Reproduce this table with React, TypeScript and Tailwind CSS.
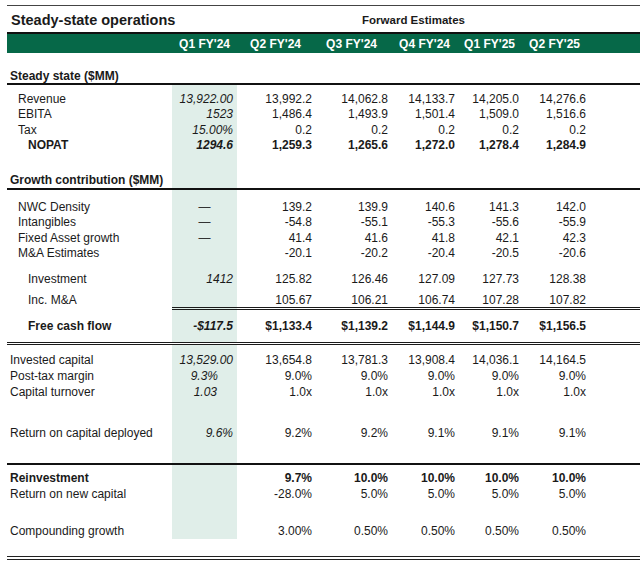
import React from 'react';
import clsx from 'clsx';

const GRID = 'grid grid-cols-[165px_65px_79px_76px_67px_64px_67px_1fr]';
const SHADE = 'bg-[#e0eee9]';

interface RowProps {
  label?: string;
  q1?: string;
  vals?: string[];
  height?: string;
  indent?: string;
  bold?: boolean;
  q1Class?: string;
  rule?: boolean;
  className?: string;
}

const Row: React.FC<RowProps> = ({
  label = '',
  q1 = '',
  vals = [],
  height = 'h-[15.5px]',
  indent = 'pl-[11px]',
  bold = false,
  q1Class = 'justify-end pr-[4px] italic',
  rule = false,
  className,
}) => {
  // Inc. M&A gets the double rule under the numbers only
  const cell = clsx('flex', rule ? 'items-end border-b-[3px] border-double border-[#1a1a1a]' : 'items-center');
  return (
    <div className={clsx(GRID, height, bold && 'font-bold', className)}>
      <div className={clsx('flex', rule ? 'items-end pb-[3px]' : 'items-center', indent)}>{label}</div>
      <div className={clsx(cell, SHADE, q1Class)}>{q1}</div>
      {[0, 1, 2, 3, 4].map((i) => (
        <div key={i} className={clsx(cell, 'justify-end pr-[4px]')}>
          {vals[i] ?? ''}
        </div>
      ))}
      <div className={cell} />
    </div>
  );
};

const Gap: React.FC<{ height: string; shaded?: boolean }> = ({ height, shaded = true }) => (
  <div className={clsx(GRID, height)}>
    <div />
    <div className={shaded ? SHADE : ''} />
  </div>
);

const headers = [
  { t: "Q1 FY'24", pr: 'pr-[7px]' },
  { t: "Q2 FY'24", pr: 'pr-[15px]' },
  { t: "Q3 FY'24", pr: 'pr-[15px]' },
  { t: "Q4 FY'24", pr: 'pr-[9px]' },
  { t: "Q1 FY'25", pr: 'pr-[8px]' },
  { t: "Q2 FY'25", pr: 'pr-[10px]' },
];

export default function App() {
  return (
    <div className="w-[640px] h-[568px] bg-white pt-[5px] pl-[7px] text-[12px] leading-[14px] text-[#1a1a1a] font-['Liberation_Sans',Arial,sans-serif] overflow-hidden">
      <div className="w-[633px]">
        <div className="border-t border-[#444]" />

        {/* Title */}
        <div className={clsx(GRID, 'h-[26px] items-center pt-[1px]')}>
          <div className="col-span-2 pl-[4px] text-[14.5px] leading-[18px] font-bold">Steady-state operations</div>
          <div className="col-span-5 text-center text-[11.5px] font-bold">Forward Estimates</div>
        </div>

        {/* Column header band */}
        <div className={clsx(GRID, 'h-[21px] border-t-2 border-[#111] bg-[#066848] text-white font-bold')}>
          <div />
          {headers.map((h) => (
            <div key={h.t} className={clsx('flex items-center justify-end', h.pr)}>
              {h.t}
            </div>
          ))}
        </div>

        <div className="h-[32px] flex items-end pl-[3px] border-b-2 border-[#111] font-bold">Steady state ($MM)</div>
        <Gap height="h-[6px]" />
        <Row label="Revenue" q1="13,922.00" vals={['13,992.2', '14,062.8', '14,133.7', '14,205.0', '14,276.6']} />
        <Row label="EBITA" q1="1523" vals={['1,486.4', '1,493.9', '1,501.4', '1,509.0', '1,516.6']} />
        <Row label="Tax" q1="15.00%" vals={['0.2', '0.2', '0.2', '0.2', '0.2']} />
        <Row label="NOPAT" indent="pl-[21px]" bold q1="1294.6" vals={['1,259.3', '1,265.6', '1,272.0', '1,278.4', '1,284.9']} />

        <div className={clsx(GRID, 'h-[37px] border-b-2 border-[#111] font-bold')}>
          <div className="flex items-end pl-[3px] pb-[1px] whitespace-nowrap">Growth contribution ($MM)</div>
          <div className={SHADE} />
        </div>
        <Gap height="h-[9px]" />
        <Row label="NWC Density" q1="—" q1Class="justify-center text-[#333]" vals={['139.2', '139.9', '140.6', '141.3', '142.0']} />
        <Row label="Intangibles" q1="—" q1Class="justify-center text-[#333]" vals={['-54.8', '-55.1', '-55.3', '-55.6', '-55.9']} />
        <Row label="Fixed Asset growth" q1="—" q1Class="justify-center text-[#333]" vals={['41.4', '41.6', '41.8', '42.1', '42.3']} />
        <Row label="M&A Estimates" vals={['-20.1', '-20.2', '-20.4', '-20.5', '-20.6']} />
        <Gap height="h-[10px]" />
        <Row label="Investment" indent="pl-[21px]" height="h-[16px]" q1="1412" vals={['125.82', '126.46', '127.09', '127.73', '128.38']} />
        <Row label="Inc. M&A" indent="pl-[21px]" height="h-[23px]" rule vals={['105.67', '106.21', '106.74', '107.28', '107.82']} />
        <Row
          label="Free cash flow"
          indent="pl-[21px]"
          height="h-[35px]"
          bold
          q1="-$117.5"
          vals={['$1,133.4', '$1,139.2', '$1,144.9', '$1,150.7', '$1,156.5']}
          className="border-b-[3px] border-double border-[#1a1a1a]"
        />

        <Gap height="h-[7px]" />
        <Row label="Invested capital" indent="pl-[3px]" height="h-[16px]" q1="13,529.00" vals={['13,654.8', '13,781.3', '13,908.4', '14,036.1', '14,164.5']} />
        <Row label="Post-tax margin" indent="pl-[3px]" height="h-[16px]" q1="9.3%" q1Class="justify-end pr-[19px] italic" vals={['9.0%', '9.0%', '9.0%', '9.0%', '9.0%']} />
        <Row label="Capital turnover" indent="pl-[3px]" height="h-[16px]" q1="1.03" q1Class="justify-end pr-[20px] italic" vals={['1.0x', '1.0x', '1.0x', '1.0x', '1.0x']} />
        <Gap height="h-[25px]" />
        <Row label="Return on capital deployed" indent="pl-[3px]" height="h-[16px]" q1="9.6%" vals={['9.2%', '9.2%', '9.1%', '9.1%', '9.1%']} />
        <Gap height="h-[22px]" />
        <div className="h-[2px] bg-[#111]" />
        <Gap height="h-[5px]" />

        <Row label="Reinvestment" indent="pl-[3px]" height="h-[16px]" bold vals={['9.7%', '10.0%', '10.0%', '10.0%', '10.0%']} />
        <Row label="Return on new capital" indent="pl-[3px]" height="h-[16px]" vals={['-28.0%', '5.0%', '5.0%', '5.0%', '5.0%']} />
        <Gap height="h-[21px]" />
        <Row label="Compounding growth" indent="pl-[3px]" height="h-[16px]" vals={['3.00%', '0.50%', '0.50%', '0.50%', '0.50%']} />
        <div className="h-[17px]" />
        <div className="border-t-4 border-double border-[#222]" />
      </div>
    </div>
  );
}
